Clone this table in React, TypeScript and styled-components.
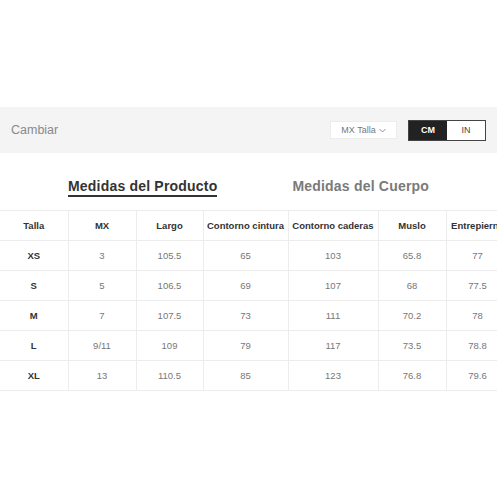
import React from "react"
import styled, { createGlobalStyle } from "styled-components"

const GlobalStyle = createGlobalStyle`
  html, body {
    margin: 0;
    padding: 0;
    background: #fff;
    font-family: "Liberation Sans", Arial, sans-serif;
  }
`

const Page = styled.div`
  width: 497px;
  padding-top: 107px;
  overflow: hidden;
`

const Toolbar = styled.div`
  height: 46px;
  background: #f4f4f4;
  display: flex;
  align-items: center;
  justify-content: space-between;
  padding: 0 11px;
`

const ChangeLabel = styled.span`
  font-size: 12.5px;
  color: #8a8a8a;
`

const Controls = styled.div`
  display: flex;
  align-items: center;
  gap: 11px;
`

const SizeSelect = styled.div`
  width: 67px;
  height: 18px;
  box-sizing: border-box;
  background: #fff;
  border: 1px solid #ececec;
  display: flex;
  align-items: center;
  justify-content: center;
  gap: 3px;
  font-size: 9px;
  color: #777;
`

const UnitToggle = styled.div`
  display: flex;
  width: 78px;
  height: 21px;
  box-sizing: border-box;
  border: 1px solid #444;
`

const UnitButton = styled.div<{ $active?: boolean }>`
  flex: 1;
  display: flex;
  align-items: center;
  justify-content: center;
  font-size: 9px;
  font-weight: ${({ $active }) => ($active ? 700 : 400)};
  background: ${({ $active }) => ($active ? "#222" : "#fff")};
  color: ${({ $active }) => ($active ? "#fff" : "#444")};
`

const Tabs = styled.div`
  height: 57px;
  display: flex;
  justify-content: center;
  align-items: flex-start;
  gap: 75px;
  padding-top: 25px;
  box-sizing: border-box;
`

const Tab = styled.div<{ $active?: boolean }>`
  font-size: 14px;
  line-height: 16px;
  font-weight: 700;
  letter-spacing: 0.2px;
  padding-bottom: 1px;
  color: ${({ $active }) => ($active ? "#333" : "#7a7a7a")};
  border-bottom: 2px solid ${({ $active }) => ($active ? "#333" : "transparent")};
`

const Table = styled.table`
  border-collapse: collapse;
  table-layout: fixed;
  width: 509px;
`

const HeadCell = styled.th`
  height: 29px;
  padding: 0;
  font-size: 9.5px;
  font-weight: 700;
  color: #333;
  text-align: center;
  white-space: nowrap;
  overflow: hidden;
  border-top: 1px solid #ececec;
  border-bottom: 1px solid #ececec;
  border-right: 1px solid #ececec;
`

const Cell = styled.td<{ $strong?: boolean }>`
  height: 29px;
  padding: 0;
  font-size: 9.5px;
  font-weight: ${({ $strong }) => ($strong ? 700 : 400)};
  color: ${({ $strong }) => ($strong ? "#333" : "#777")};
  text-align: center;
  white-space: nowrap;
  border-bottom: 1px solid #ececec;
  border-right: 1px solid #ececec;
`

const Chevron = () => (
  <svg width="7" height="5" viewBox="0 0 7 5" fill="none">
    <path d="M0.5 1 L3.5 4 L6.5 1" stroke="#888" strokeWidth="0.9" />
  </svg>
)

const widths = [68, 68, 67, 85, 90, 68, 63]
const headers = ["Talla", "MX", "Largo", "Contorno cintura", "Contorno caderas", "Muslo", "Entrepierna"]
const rows = [
  ["XS", "3", "105.5", "65", "103", "65.8", "77"],
  ["S", "5", "106.5", "69", "107", "68", "77.5"],
  ["M", "7", "107.5", "73", "111", "70.2", "78"],
  ["L", "9/11", "109", "79", "117", "73.5", "78.8"],
  ["XL", "13", "110.5", "85", "123", "76.8", "79.6"],
]

export default function App() {
  return (
    <Page>
      <GlobalStyle />
      <Toolbar>
        <ChangeLabel>Cambiar</ChangeLabel>
        <Controls>
          <SizeSelect>
            MX Talla <Chevron />
          </SizeSelect>
          <UnitToggle>
            <UnitButton $active>CM</UnitButton>
            <UnitButton>IN</UnitButton>
          </UnitToggle>
        </Controls>
      </Toolbar>
      <Tabs>
        <Tab $active>Medidas del Producto</Tab>
        <Tab>Medidas del Cuerpo</Tab>
      </Tabs>
      <Table>
        <colgroup>
          {widths.map((w, i) => (
            <col key={i} style={{ width: w }} />
          ))}
        </colgroup>
        <thead>
          <tr>
            {headers.map((h) => (
              <HeadCell key={h}>{h}</HeadCell>
            ))}
          </tr>
        </thead>
        <tbody>
          {rows.map((r) => (
            <tr key={r[0]}>
              {r.map((v, i) => (
                <Cell key={i} $strong={i === 0}>
                  {v}
                </Cell>
              ))}
            </tr>
          ))}
        </tbody>
      </Table>
    </Page>
  )
}
